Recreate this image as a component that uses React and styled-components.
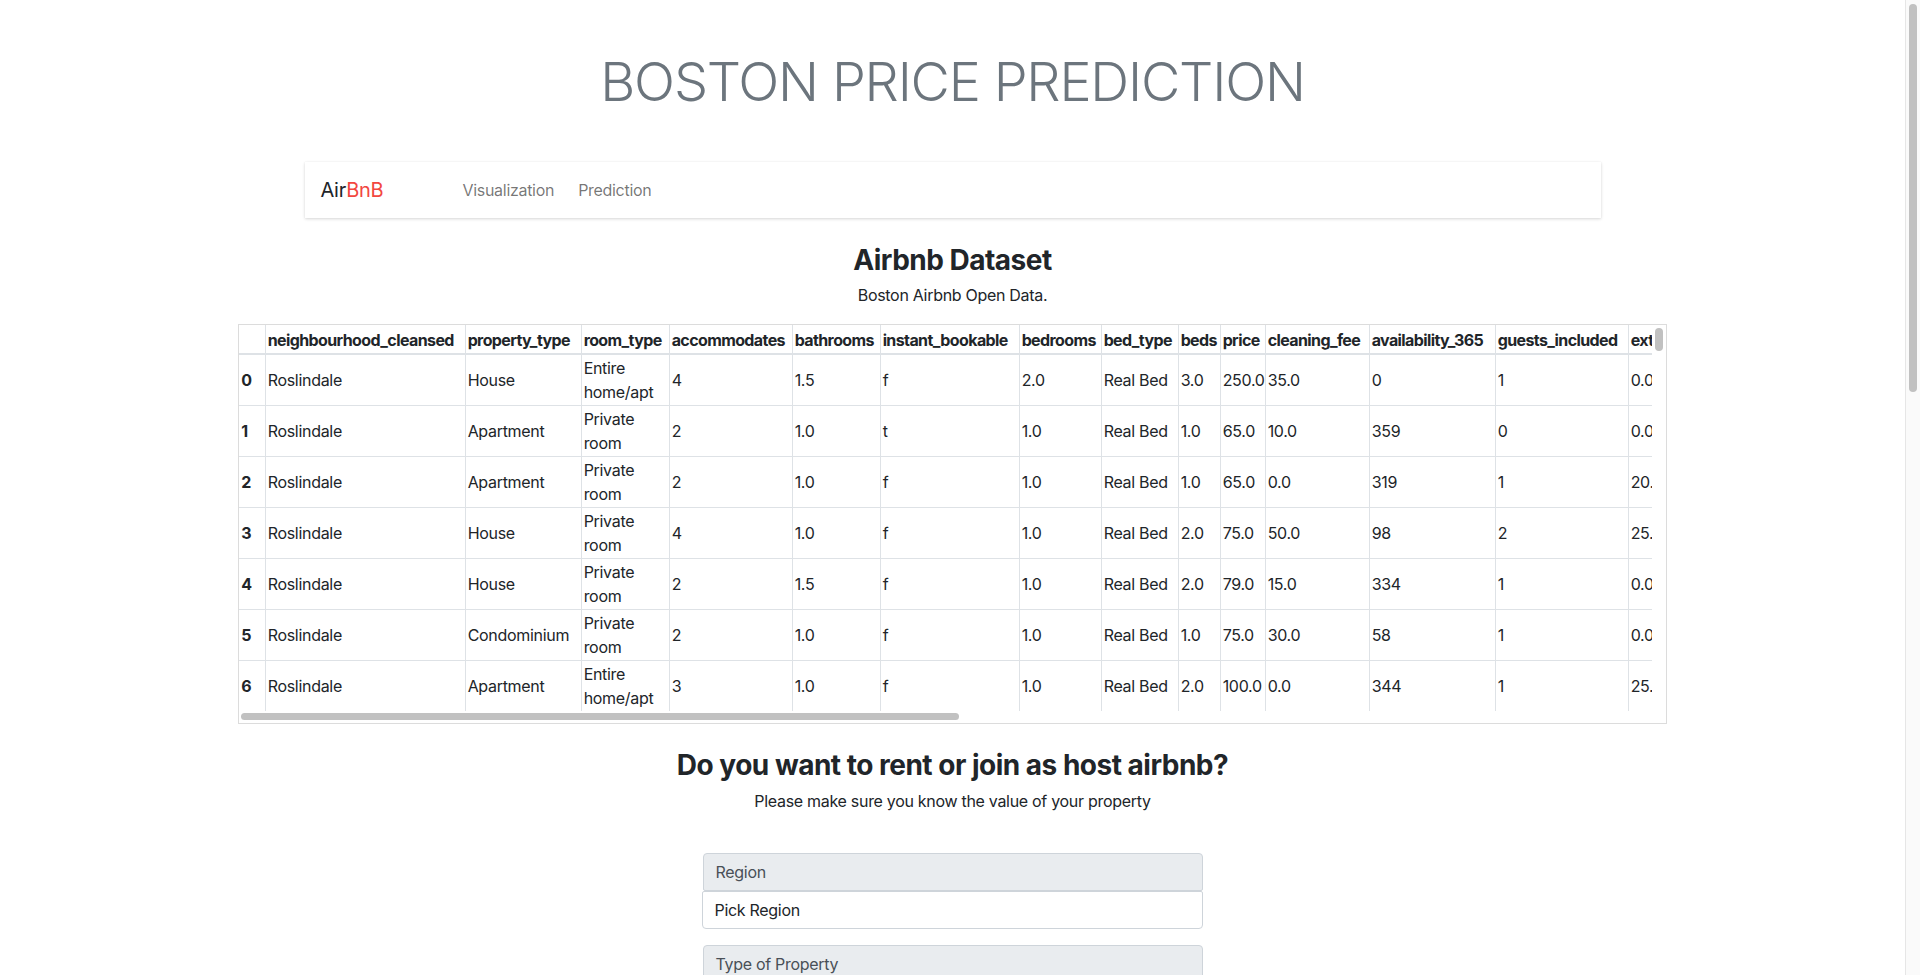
import React from 'react';
import styled, { createGlobalStyle } from 'styled-components';

const GlobalStyle = createGlobalStyle`
  * { box-sizing: border-box; }
  body {
    margin: 0;
    background: #fff;
    color: #212529;
    font-family: Inter, "Noto Sans", sans-serif;
    font-size: 16px;
    line-height: 1.5;
    letter-spacing: -0.3px;
  }
`;

const Page = styled.div`
  margin-right: 15px;
  padding-bottom: 60px;
`;

/* the page's own scrollbar, drawn over the right edge */
const PageScrollbar = styled.div`
  position: fixed;
  top: 0;
  right: 0;
  width: 15px;
  height: 100vh;
  padding: 4px 3px 0;
  background: #fafafa;
  border-left: 1px solid #e6e6e6;
`;

const Thumb = styled.div`
  width: ${(p) => p.$w};
  height: ${(p) => p.$h};
  border-radius: 4px;
  background: #c1c1c1;
`;

const Title = styled.h1`
  margin: 48px 0 0;
  text-align: center;
  font-size: 54px;
  font-weight: 300;
  line-height: 1.25;
  letter-spacing: -1.2px;
  color: #6c757d;
`;

const Navbar = styled.nav`
  width: 1296px;
  height: 56px;
  margin: 46px auto 0;
  padding: 0 16px;
  display: flex;
  align-items: center;
  background: #fff;
  box-shadow: 0 1px 3px rgba(0, 0, 0, 0.16), 0 0 1px rgba(0, 0, 0, 0.06);
`;

const Brand = styled.a`
  min-width: 142px;
  font-size: 20px;
  color: #212529;
  text-decoration: none;
  span { color: #f2473f; }
`;

const NavList = styled.div`
  display: flex;
  gap: 24px;
`;

const NavLink = styled.a`
  color: rgba(0, 0, 0, 0.55);
  text-decoration: none;
`;

const SectionTitle = styled.h2`
  margin: ${(p) => p.$top}px 0 6px;
  text-align: center;
  font-size: 28px;
  font-weight: 700;
  line-height: 1.2;
  letter-spacing: -0.5px;
`;

const Lead = styled.p`
  margin: 0 0 ${(p) => p.$bottom}px;
  text-align: center;
`;

const TableFrame = styled.div`
  width: 75%;
  margin: 0 auto;
  border: 1px solid #dcdcdc;
  display: grid;
  grid-template-columns: minmax(0, 1fr) 14px;
  grid-template-rows: 386px 12px;
`;

const Viewport = styled.div`
  overflow: hidden;
`;

const VTrack = styled.div`
  padding: 3px 3px 0;
`;

const HTrack = styled.div`
  padding: 2px 0 0 2px;
`;

const Table = styled.table`
  width: ${(p) => p.$width}px;
  border-collapse: collapse;
  border-style: hidden;
  table-layout: fixed;
`;

const Col = styled.col`
  width: ${(p) => p.$w}px;
`;

const HeadCell = styled.th`
  padding: 3px 2px 1px;
  border: 1px solid #dee2e6;
  border-bottom-width: 2px;
  text-align: left;
  font-weight: 700;
  line-height: 24px;
  letter-spacing: -0.6px;
  white-space: nowrap;
  overflow: hidden;
`;

const IndexCell = styled.th`
  padding: 1px 2px;
  border: 1px solid #dee2e6;
  text-align: left;
  font-weight: 700;
  line-height: 24px;
  vertical-align: middle;
`;

const Cell = styled.td`
  padding: 1px 2px;
  border: 1px solid #dee2e6;
  line-height: 24px;
  vertical-align: middle;
  white-space: ${(p) => (p.$wrap ? 'normal' : 'nowrap')};
  overflow: hidden;
`;

const Form = styled.form`
  width: 500px;
  margin: 0 auto;
`;

const Group = styled.div`
  margin-bottom: 16px;
`;

const GroupLabel = styled.div`
  height: 38px;
  padding: 6px 12px;
  background: #e9ecef;
  border: 1px solid #ced4da;
  border-radius: 4px 4px 2px 2px;
  color: #495057;
  line-height: 24px;
`;

const Picker = styled.div`
  height: 38px;
  margin-left: -1px;
  padding: 6px 12px;
  background: #fff;
  border: 1px solid #ced4da;
  border-radius: 2px 2px 4px 4px;
  color: #212529;
  line-height: 24px;
`;

const SubmitButton = styled.button`
  margin-top: 8px;
  padding: 6px 12px;
  border: 1px solid #007bff;
  border-radius: 4px;
  background: #007bff;
  color: #fff;
  font: inherit;
`;

const columns = [
  ['', 26],
  ['neighbourhood_cleansed', 200],
  ['property_type', 116],
  ['room_type', 88],
  ['accommodates', 123],
  ['bathrooms', 88],
  ['instant_bookable', 139],
  ['bedrooms', 82],
  ['bed_type', 77],
  ['beds', 42],
  ['price', 45],
  ['cleaning_fee', 104],
  ['availability_365', 126],
  ['guests_included', 133],
  ['extra_people', 105],
];

const tableWidth = columns.reduce((sum, c) => sum + c[1], 0);

const rows = [
  ['Roslindale', 'House', 'Entire home/apt', '4', '1.5', 'f', '2.0', 'Real Bed', '3.0', '250.0', '35.0', '0', '1', '0.0'],
  ['Roslindale', 'Apartment', 'Private room', '2', '1.0', 't', '1.0', 'Real Bed', '1.0', '65.0', '10.0', '359', '0', '0.0'],
  ['Roslindale', 'Apartment', 'Private room', '2', '1.0', 'f', '1.0', 'Real Bed', '1.0', '65.0', '0.0', '319', '1', '20.0'],
  ['Roslindale', 'House', 'Private room', '4', '1.0', 'f', '1.0', 'Real Bed', '2.0', '75.0', '50.0', '98', '2', '25.0'],
  ['Roslindale', 'House', 'Private room', '2', '1.5', 'f', '1.0', 'Real Bed', '2.0', '79.0', '15.0', '334', '1', '0.0'],
  ['Roslindale', 'Condominium', 'Private room', '2', '1.0', 'f', '1.0', 'Real Bed', '1.0', '75.0', '30.0', '58', '1', '0.0'],
  ['Roslindale', 'Apartment', 'Entire home/apt', '3', '1.0', 'f', '1.0', 'Real Bed', '2.0', '100.0', '0.0', '344', '1', '25.0'],
];

const fields = [
  ['Region', 'Pick Region'],
  ['Type of Property', 'Pick Property Type'],
  ['Room Type', 'Pick Room Type'],
  ['Accommodates', 'Number of guests'],
  ['Bathrooms', 'Number of bathrooms'],
  ['Instant Bookable', 'Pick an option'],
  ['Bedrooms', 'Number of bedrooms'],
  ['Bed Type', 'Pick Bed Type'],
  ['Beds', 'Number of beds'],
  ['Cleaning Fee', 'Cleaning fee in $'],
  ['Availability', 'Days available per year'],
  ['Guests Included', 'Number of guests included'],
  ['Extra People', 'Fee per extra person in $'],
  ['Minimum Nights', 'Minimum number of nights'],
  ['Number of Reviews', 'Number of reviews'],
  ['Review Score', 'Overall rating'],
];

const DataTable = () => (
  <TableFrame>
    <Viewport>
      <Table $width={tableWidth}>
        <colgroup>
          {columns.map(([name, w]) => (
            <Col key={name || 'index'} $w={w} />
          ))}
        </colgroup>
        <thead>
          <tr>
            {columns.map(([name]) => (
              <HeadCell key={name || 'index'}>{name}</HeadCell>
            ))}
          </tr>
        </thead>
        <tbody>
          {rows.map((row, i) => (
            <tr key={i}>
              <IndexCell>{i}</IndexCell>
              {row.map((value, j) => (
                <Cell key={j} $wrap={j === 2}>{value}</Cell>
              ))}
            </tr>
          ))}
        </tbody>
      </Table>
    </Viewport>
    <VTrack>
      <Thumb $w="8px" $h="23px" />
    </VTrack>
    <HTrack>
      <Thumb $w="718px" $h="7px" />
    </HTrack>
    <div />
  </TableFrame>
);

const App = () => (
  <Page>
    <GlobalStyle />
    <PageScrollbar>
      <Thumb $w="8px" $h="388px" />
    </PageScrollbar>

    <Title>BOSTON PRICE PREDICTION</Title>
    <Navbar>
      <Brand href="#">
        Air<span>BnB</span>
      </Brand>
      <NavList>
        <NavLink href="#">Visualization</NavLink>
        <NavLink href="#">Prediction</NavLink>
      </NavList>
    </Navbar>

    <SectionTitle $top={26}>Airbnb Dataset</SectionTitle>
    <Lead $bottom={17}>Boston Airbnb Open Data.</Lead>
    <DataTable />

    <SectionTitle $top={25}>Do you want to rent or join as host airbnb?</SectionTitle>
    <Lead $bottom={40}>Please make sure you know the value of your property</Lead>
    <Form onSubmit={(e) => e.preventDefault()}>
      {fields.map(([label, hint]) => (
        <Group key={label}>
          <GroupLabel>{label}</GroupLabel>
          <Picker>{hint}</Picker>
        </Group>
      ))}
      <SubmitButton type="submit">Predict</SubmitButton>
    </Form>
  </Page>
);

export default App;
